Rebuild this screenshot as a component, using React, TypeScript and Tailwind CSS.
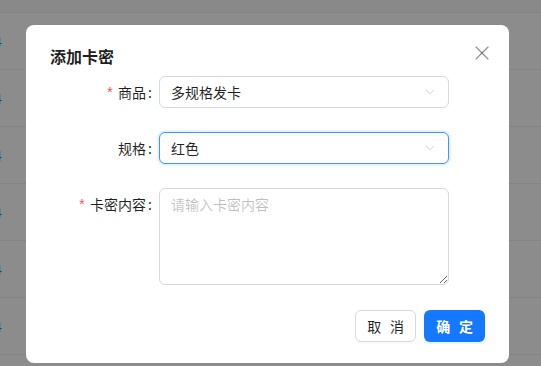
import React from 'react';
import { ChevronDown, X } from 'lucide-react';

const rows = [0, 1, 2, 3, 4, 5];

const Label: React.FC<{ text: string; required?: boolean }> = ({ text, required }) => (
  <div className="w-[109px] shrink-0 flex items-center justify-end h-8 pr-[7px] text-sm text-black/[0.88]">
    {required && <span className="text-[#ff4d4f] mr-1 mt-1 font-['Liberation_Mono',monospace] text-sm leading-none">*</span>}
    <span>{text}</span>
    <span className="ml-[2px]">:</span>
  </div>
);

const SelectBox: React.FC<{ value: string; focused?: boolean }> = ({ value, focused }) => (
  <div
    className={
      focused
        ? 'w-[290px] h-8 rounded-md border border-[#4096ff] shadow-[0_0_0_2px_rgba(5,145,255,0.1)] flex items-center pl-[11px] pr-[11px] bg-white'
        : 'w-[290px] h-8 rounded-md border border-[#d9d9d9] flex items-center pl-[11px] pr-[11px] bg-white'
    }
  >
    <span className="flex-1 text-sm text-black/[0.88]">{value}</span>
    <ChevronDown className="w-[14px] h-[14px] text-black/25" strokeWidth={1.3} />
  </div>
);

export default function App() {
  return (
    <div className="relative w-[541px] h-[366px] overflow-hidden bg-white font-['Noto_Sans_CJK_SC',sans-serif]">
      {/* page behind the modal */}
      <div className="flex flex-col">
        <div className="h-[13px] bg-[#fafafa] border-b border-[#f0f0f0]" />
        {rows.map((r) => (
          <div key={r} className="h-[57px] border-b border-[#f0f0f0] flex items-center">
            <span className="-ml-[6px] text-sm text-[#1677ff]">4</span>
          </div>
        ))}
      </div>

      {/* mask */}
      <div className="absolute inset-0 bg-black/45" />

      {/* modal */}
      <div className="absolute left-[26px] top-[25px] w-[483px] h-[338px] bg-white rounded-lg px-6 pt-5 pb-5 flex flex-col">
        <button className="absolute right-[15px] top-[16px] w-6 h-6 flex items-center justify-center text-black/45">
          <X className="w-6 h-6" strokeWidth={1.1} />
        </button>
        <div className="text-base font-semibold text-black/[0.88] leading-[22px] mb-[9px]">添加卡密</div>

        <div className="flex flex-col gap-6">
          <div className="flex">
            <Label text="商品" required />
            <SelectBox value="多规格发卡" />
          </div>
          <div className="flex">
            <Label text="规格" />
            <SelectBox value="红色" focused />
          </div>
          <div className="flex">
            <Label text="卡密内容" required />
            <textarea
              className="w-[290px] h-[97px] rounded-md border border-[#d9d9d9] px-[11px] py-1 text-sm leading-[22px] text-black/[0.88] placeholder:text-black/25 outline-none resize-y"
              placeholder="请输入卡密内容"
            />
          </div>
        </div>

        <div className="flex justify-end gap-2 mt-[25px]">
          <button className="h-8 w-[61px] rounded-md border border-[#d9d9d9] bg-white text-sm text-black/[0.88] shadow-[0_2px_0_rgba(0,0,0,0.02)] tracking-[0.2em] pl-[3px]">
            取 消
          </button>
          <button className="h-8 w-[61px] rounded-md bg-[#1677ff] text-sm text-white font-semibold shadow-[0_2px_0_rgba(5,145,255,0.1)] tracking-[0.2em] pl-[3px]">
            确 定
          </button>
        </div>
      </div>
    </div>
  );
}
